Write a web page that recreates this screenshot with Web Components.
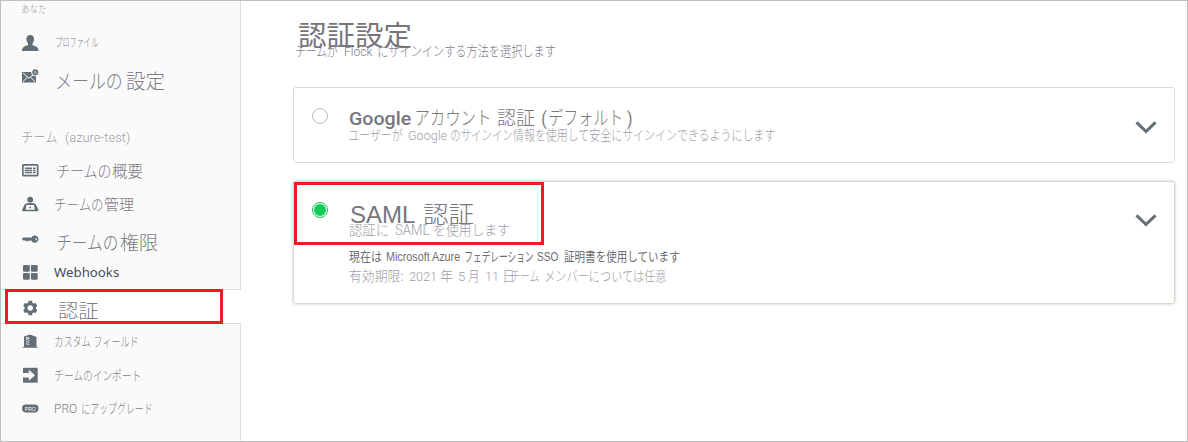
<!DOCTYPE html>
<html lang="ja">
<head>
<meta charset="utf-8">
<title>認証設定</title>
<style>
html,body{margin:0;height:100%;background:#fff}
body{font-family:"Noto Sans CJK JP","Liberation Sans",sans-serif;overflow:hidden}
</style>
</head>
<body>
<settings-page></settings-page>
<script>
const define = (name, html, setup) => customElements.define(name, class extends HTMLElement {
  constructor(){ super(); this.attachShadow({mode:'open'}).innerHTML = html; }
  connectedCallback(){ if(setup) setup(this); }
});

// A text run whose ink occupies exactly w pixels.
const pen = document.createElement('canvas').getContext('2d');
define('text-run', `<style>
:host{display:block;flex:none;white-space:pre;width:var(--w);margin-left:var(--g,0)}
span{display:inline-block;transform-origin:0 50%}
</style><span></span>`, el => {
  const w = +el.getAttribute('w'), g = +(el.getAttribute('g')||0), f = el.getAttribute('font');
  if (f) el.style.fontFamily = f;
  if (el.hasAttribute('size')) el.style.fontSize = el.getAttribute('size')+'px';
  if (el.hasAttribute('weight')) el.style.fontWeight = el.getAttribute('weight');
  el.style.setProperty('--w', w+'px'); el.style.setProperty('--g', g+'px');
  const s = el.shadowRoot.querySelector('span'); s.textContent = el.getAttribute('text');
  const c = getComputedStyle(el);
  pen.font = c.fontWeight+' '+c.fontSize+' '+c.fontFamily;
  const m = pen.measureText(s.textContent), left = -m.actualBoundingBoxLeft;
  const k = w/(m.actualBoundingBoxRight-left);
  s.style.transform = `translateX(${-left*k}px) scaleX(${k})`;
});

define('text-line', `<style>
:host{display:flex;align-items:baseline;flex:none;height:var(--h,20px);line-height:var(--h,20px);font-weight:300}
</style><slot></slot>`);

const icons = {
 user:'<path d="M8.2 0c2.300 0 3.800 1.400 3.800 3.800 0 2-.7 3.600-1.500 4.400v1.900c2.500 1.200 6 1.600 6 5.900H0c0-4.300 3.500-4.700 6-5.900V8.200C5.200 7.400 4.400 5.800 4.400 3.800 4.400 1.400 5.900 0 8.200 0z"/>',
 mail:'<path d="M0 3h14v10.500H0z"/><path d="M1 4l6 5.300L13 4M1 12.500l4.500-4.300M13 12.500L8.500 8.200" fill="none" stroke="#fafafa" stroke-width="1"/><circle cx="13.300" cy="3.200" r="4" fill="#fafafa"/><circle cx="13.300" cy="3.200" r="2.300" fill="#b3b9bc" stroke="#636e75" stroke-width="1.500"/><path d="M12.300 4.200l2-2" stroke="#636e75" stroke-width=".9"/>',
 card:'<rect x=".8" y="2.800" width="14.900" height="10.900" rx="1" fill="none" stroke="#636e75" stroke-width="1.700"/><path d="M3 5.400h7v1.800H3zM11 5.400h2.600v1.800H11zM3 8h7v1.200H3zM11 8h2.600v1.200H11zM3 10h7v1.300H3zM11 10h2.600v1.300H11z"/>',
 admin:'<circle cx="8.200" cy="3.700" r="2.900"/><path d="M2.700 8.300Q4 7 8.200 7t5.500 1.300l2.800 5.700-1 1.200H1L0 14z"/><path d="M4.300 9h7.800l.5 4.700H3.800z" fill="#fafafa"/><circle cx="8.200" cy="11.500" r=".9"/>',
 key:'<path fill-rule="evenodd" d="M0 8.500l1.500-1h8C10.200 6 11.300 5.400 12.700 5.400c2.300 0 3.800 1.500 3.800 3.700s-1.500 3.700-3.800 3.700c-1.600 0-2.700-.8-3.300-2.200H7.600l-.8.9-1-.9-1 1-1.200-1.100H1.400L0 9.300zM13.600 7.900v2.400h1.100V7.900z"/>',
 grid:'<rect x="1" y="1" width="6.800" height="6.800" rx="1.200"/><rect x="8.900" y="1" width="6.800" height="6.800" rx="1.200"/><rect x="1" y="8.900" width="6.800" height="6.800" rx="1.200"/><rect x="8.900" y="8.900" width="6.800" height="6.800" rx="1.200"/>',
 gear:'<path fill-rule="evenodd" d="M6.600.8h3.300l.5 2 1.300.7 2-.6 1.600 2.800L13.900 7.200v1.600l1.400 1.500-1.600 2.800-2-.6-1.300.8-.5 1.900H6.600l-.5-1.900-1.300-.8-2 .6-1.600-2.800 1.400-1.500V7.200L1.200 5.700l1.600-2.800 2 .6 1.300-.7zM8.250 5.300a2.700 2.700 0 100 5.400 2.700 2.700 0 000-5.400z"/>',
 building:'<path d="M2 3.500L8 1.500l6.500 2.600V14H16v.8H.5V14H2z"/><path d="M4 4.300l3.300 1M4 6.400l3.300 1M4 8.500l3.300 1M4 10.600l3.300 1M4 5.300l3.300-.4" stroke="#fafafa" stroke-width=".8"/>',
 import:'<path d="M1 .8h14.700v14.900H1z"/><path d="M0 5.900h6.800V2.700l6.300 5.500-6.300 5.500v-3.200H0z" fill="#fafafa"/>',
 pro:'<rect x="0" y="4.500" width="16.500" height="8" rx="4"/><text x="8.250" y="10.500" text-anchor="middle" textLength="11" lengthAdjust="spacingAndGlyphs" font-family="Liberation Sans" font-size="5.600" fill="#fafafa">PRO</text>'
};
define('side-icon', `<style>:host{display:block;width:16.500px;height:16.500px;flex:none}svg{display:block}</style><svg width="16.500" height="16.500" viewBox="0 0 16.500 16.500" fill="#636e75"></svg>`);

define('side-item', `<style>
:host{display:flex;align-items:center;box-sizing:border-box;flex:none;height:var(--row,34px);padding-left:21px;color:#7f7b85}
:host([active]){background:#fff;border-top:1px solid #ddd;border-bottom:1px solid #ddd;margin-right:-1px}
side-icon{margin-top:var(--iy,0)}
text-line{margin-left:var(--tx,16px);margin-top:var(--ty,0)}
</style><side-icon></side-icon><text-line><slot></slot></text-line>`,
 el => { el.shadowRoot.querySelector('side-icon').shadowRoot.querySelector('svg').innerHTML = icons[el.getAttribute('icon')]; });

define('red-frame', `<style>:host{position:absolute;box-sizing:border-box;border:3px solid #ed1c24;pointer-events:none}</style>`);

define('side-bar', `<style>
:host{display:flex;flex-direction:column;box-sizing:border-box;width:240px;flex:none;background:#fafafa;border-right:1px solid #ddd;position:relative}
.head{padding-left:21px;color:#9f9da4}
red-frame{left:4px;top:288px;width:218px;height:35px}
</style>
<text-line class="head" style="height:25px;--h:15px;font-size:10px"><text-run w="24.500" text="あなた"></text-run></text-line>
<side-item icon="user" style="font-size:12px;--ty:-3px;--tx:17px"><text-run w="42" text="プロファイル"></text-run></side-item>
<side-item icon="mail" style="font-size:20px;--ty:8px;--tx:18px"><text-run w="64" text="メールの"></text-run><text-run g="5" w="39" text="設定"></text-run></side-item>
<text-line class="head" style="height:34px;--h:34px;margin-top:25px;margin-bottom:1px;font-size:14px"><text-run w="35" text="チーム"></text-run><text-run g="8" w="65" size="13" weight="300" font="Roboto" text="(azure-test)"></text-run></text-line>
<side-item icon="card" style="--row:33px;font-size:16px;--tx:18px;--ty:-1px"><text-run w="54" text="チームの"></text-run><text-run g="1" w="31" text="概要"></text-run></side-item>
<side-item icon="admin" style="font-size:15px;--tx:16px"><text-run w="48" text="チームの"></text-run><text-run g="1" w="30" text="管理"></text-run></side-item>
<side-item icon="key" style="--row:35px;font-size:19px;--ty:6px;--tx:18px"><text-run w="61" text="チームの"></text-run><text-run g="2" w="38" text="権限"></text-run></side-item>
<side-item icon="grid" style="--row:33px;font-size:13px;--tx:15px;--ty:-1px;color:#484b52"><text-run w="65" weight="400" font="Noto Sans" text="Webhooks"></text-run></side-item>
<side-item icon="gear" active style="--row:35px;font-size:19.500px;--ty:6px;--iy:3px;--tx:19px"><text-run w="40" text="認証"></text-run></side-item>
<side-item icon="building" style="font-size:13px"><text-run w="35" text="カスタム"></text-run><text-run g="5" w="43" text="フィールド"></text-run></side-item>
<side-item icon="import" style="font-size:13px;--ty:-1px"><text-run w="85" text="チームのインポート"></text-run></side-item>
<side-item icon="pro" style="--row:33px;font-size:13px;--ty:-2px"><text-run w="22" size="12" weight="300" font="Roboto" text="PRO"></text-run><text-run g="5" w="70" text="にアップグレード"></text-run></side-item>
<red-frame></red-frame>`);

define('radio-dot', `<style>
:host{display:block;box-sizing:border-box;width:16px;height:16px;border:1px solid #bbb;border-radius:50%;flex:none;margin:var(--ry) 0 0 18px;padding:1px}
:host([checked]){border-color:#13cb57}
:host([checked]) i{display:block;width:12px;height:12px;border-radius:50%;background:#13cb57}
</style><i></i>`);

define('auth-card', `<style>
:host{display:flex;box-sizing:border-box;position:relative;width:882px;height:var(--ch);border:1px solid #dbdbcd;border-radius:3px;background:#fff}
:host([selected]){box-shadow:0 0 3px rgba(0,0,0,.24)}
.body{flex:1;display:flex;flex-direction:column;padding-left:20px}
svg{flex:none;margin:var(--cy) 17px 0 0}
</style><slot name="radio"></slot><div class="body"><slot></slot></div>
<svg width="22" height="14" viewBox="0 0 22 14" fill="none" stroke="#636e75" stroke-width="3"><path d="M1.500 1.300L11 10.500l9.500-9.200"/></svg><slot name="overlay"></slot>`);

define('settings-page', `<style>
:host{display:flex;box-sizing:border-box;width:1188px;height:442px;border:1px solid #bfbfbf;background:#fff}
main{flex:1;padding-left:52px;display:flex;flex-direction:column}
h1{margin:0;padding:13px 0 0 6px;height:26px;color:#75757b}
.intro{height:41px;padding-left:3px;color:#7e7b86;font-size:14px}
.t{--h:30px;color:#77767d}.s{font-size:14px;color:#a09ea6}
</style>
<side-bar></side-bar>
<main>
<h1><text-line style="--h:40px;font-size:28px;font-weight:400"><text-run w="112" text="認証設定"></text-run></text-line></h1>
<text-line class="intro"><text-run w="42" text="チームが"></text-run><text-run g="7" w="28" weight="300" size="13" font="Roboto" text="Flock"></text-run><text-run g="5" w="177" text="にサインインする方法を選択します"></text-run></text-line>
<auth-card style="--ch:76px;--cy:33px;margin-top:6px">
<radio-dot slot="radio" style="--ry:20px"></radio-dot>
<text-line class="t" style="font-size:19px;margin:14px 0 0 2px"><text-run w="61" weight="500" size="19" font="Roboto" text="Google"></text-run><text-run g="5" w="73" text="アカウント"></text-run><text-run g="8" w="38" text="認証"></text-run><text-run g="7" w="5" weight="400" font="Roboto" text="("></text-run><text-run g="2" w="72" text="デフォルト"></text-run><text-run g="6" w="5" weight="400" font="Roboto" text=")"></text-run></text-line>
<text-line class="s" style="margin:-8px 0 0 1px"><text-run w="54" text="ユーザーが"></text-run><text-run g="5" w="39" size="13.500" weight="300" font="Roboto" text="Google"></text-run><text-run g="4" w="61" text="のサインイン"></text-run><text-run g="1" w="262" text="情報を使用して安全にサインインできるようにします"></text-run></text-line>
</auth-card>
<auth-card selected style="--ch:123px;--cy:32px;margin-top:18px">
<radio-dot slot="radio" checked style="--ry:20px"></radio-dot>
<text-line class="t" style="font-size:24px;margin:16px 0 0 3px"><text-run w="64" weight="400" size="24" font="Liberation Sans" text="SAML"></text-run><text-run g="9" w="50" text="認証"></text-run></text-line>
<text-line class="s" style="margin:-9px 0 0 1px"><text-run w="39" text="認証に"></text-run><text-run g="7" w="35" weight="300" size="14" font="Roboto" text="SAML"></text-run><text-run g="4" w="75" text="を使用します"></text-run></text-line>
<text-line class="s" style="margin:7px 0 0 1px;font-size:13px;color:#6e6d73;font-weight:400"><text-run w="33" text="現在は"></text-run><text-run g="4" w="75" size="12" font="Liberation Sans" text="Microsoft Azure"></text-run><text-run g="4" w="68" text="フェデレーション"></text-run><text-run g="4" w="21" size="12" font="Liberation Sans" text="SSO"></text-run><text-run g="6" w="116" text="証明書を使用しています"></text-run></text-line>
<text-line class="s" style="margin:-1px 0 0 1px"><text-run w="54" text="有効期限:"></text-run><text-run g="6" w="26" size="13" weight="300" font="Roboto" text="2021"></text-run><text-run g="5" w="13" text="年"></text-run><text-run g="6" w="6" size="13" weight="300" font="Roboto" text="5"></text-run><text-run g="3" w="10" text="月"></text-run><text-run g="8" w="11" size="13" weight="300" font="Roboto" text="11"></text-run><text-run g="7" w="9" text="日"></text-run><text-run g="-2" w="28" text="チーム"></text-run><text-run g="6" w="122" text="メンバーについては任意"></text-run></text-line>
<red-frame slot="overlay" style="left:0;top:0;width:250px;height:63px"></red-frame>
</auth-card>
</main>`);
</script>
</body>
</html>
